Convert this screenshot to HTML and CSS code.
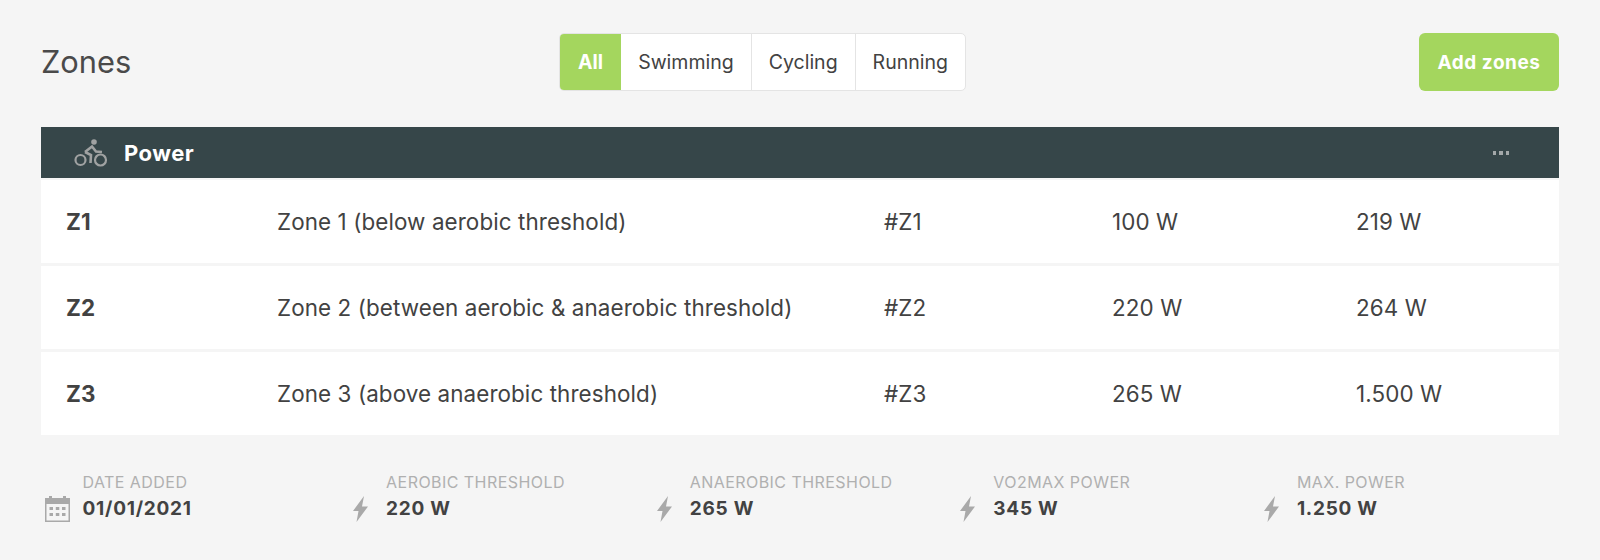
FILE: index.html
```html
<!DOCTYPE html>
<html lang="en">
<head>
<meta charset="utf-8">
<title>Zones</title>
<link rel="stylesheet" href="styles.css">
</head>
<body>
<main class="page">
  <header class="top">
    <h1 class="title">Zones</h1>
    <nav class="seg">
      <a class="seg-item active">All</a>
      <a class="seg-item">Swimming</a>
      <a class="seg-item">Cycling</a>
      <a class="seg-item">Running</a>
    </nav>
    <button class="add">Add zones</button>
  </header>
  <section class="bar">
    <svg class="bike" viewBox="0 0 34 28" width="34" height="28" fill="none" stroke="#a0a2a2">
      <circle cx="6.500" cy="21" r="5" stroke-width="2.200"/>
      <circle cx="26.500" cy="21" r="5.500" stroke-width="2.200"/>
      <circle cx="20" cy="3" r="2.800" fill="#a0a2a2" stroke="none"/>
      <path d="M11 13 L18 7.500 L22 12.500 L28 13" stroke-width="2.600"/>
      <path d="M11 13 L17 16 L16.500 24" stroke-width="2.600"/>
    </svg>
    <span class="bar-title">Power</span>
    <span class="dots"><i></i><i></i><i></i></span>
  </section>
  <div class="rows">
    <div class="row"><b>Z1</b><span>Zone 1 (below aerobic threshold)</span><span>#Z1</span><span>100 W</span><span>219 W</span></div>
    <div class="row"><b>Z2</b><span>Zone 2 (between aerobic &amp; anaerobic threshold)</span><span>#Z2</span><span>220 W</span><span>264 W</span></div>
    <div class="row"><b>Z3</b><span>Zone 3 (above anaerobic threshold)</span><span>#Z3</span><span>265 W</span><span>1.500 W</span></div>
  </div>
  <footer class="stats">
    <div class="stat">
      <span class="ico">
        <svg viewBox="0 0 27 27" width="27" height="27">
          <path fill="#a9a9a9" d="M1 3h4V1h3v2h11V1h3v2h4v24H1zM2.500 9v16.500h22V9z"/>
          <path fill="#a9a9a9" d="M5.500 12h3.500v3h-3.500zM11.800 12h3.500v3h-3.500zM18 12h3.500v3h-3.500zM5.500 18h3.500v3h-3.500zM11.800 18h3.500v3h-3.500zM18 18h3.500v3h-3.500z"/>
        </svg>
      </span>
      <div><div class="label">DATE ADDED</div><div class="value">01/01/2021</div></div>
    </div>
    <div class="stat">
      <span class="ico"><svg viewBox="0 0 15 26" width="15" height="26"><path fill="#a9a9a9" d="M11 0 L0 15 H5.500 L3.500 26 L15 10.500 H9 Z"/></svg></span>
      <div><div class="label">AEROBIC THRESHOLD</div><div class="value">220 W</div></div>
    </div>
    <div class="stat">
      <span class="ico"><svg viewBox="0 0 15 26" width="15" height="26"><path fill="#a9a9a9" d="M11 0 L0 15 H5.500 L3.500 26 L15 10.500 H9 Z"/></svg></span>
      <div><div class="label">ANAEROBIC THRESHOLD</div><div class="value">265 W</div></div>
    </div>
    <div class="stat">
      <span class="ico"><svg viewBox="0 0 15 26" width="15" height="26"><path fill="#a9a9a9" d="M11 0 L0 15 H5.500 L3.500 26 L15 10.500 H9 Z"/></svg></span>
      <div><div class="label">VO2MAX POWER</div><div class="value">345 W</div></div>
    </div>
    <div class="stat">
      <span class="ico"><svg viewBox="0 0 15 26" width="15" height="26"><path fill="#a9a9a9" d="M11 0 L0 15 H5.500 L3.500 26 L15 10.500 H9 Z"/></svg></span>
      <div><div class="label">MAX. POWER</div><div class="value">1.250 W</div></div>
    </div>
  </footer>
</main>
</body>
</html>
```
FILE: styles.css
```css
* { box-sizing: border-box; }
html, body { margin: 0; height: 100%; }
body {
  background: #f5f5f5;
  color: #424242;
  font-family: Inter, "Liberation Sans", sans-serif;
  overflow: hidden;
}
.page { padding: 33px 41px 0; }
.top {
  display: grid;
  grid-template-columns: 518px auto 1fr;
  align-items: center;
  height: 58px;
}
.title { margin: 0 0 1px; font-size: 30.800px; font-weight: 400; color: #4a4a4a; }
.seg {
  display: flex;
  height: 58px;
  align-self: start;
  border: 1px solid #e4e4e4;
  border-radius: 5px;
  background: #fff;
  overflow: hidden;
}
.seg-item {
  display: flex;
  align-items: center;
  padding: 0 17px;
  font-size: 19.500px;
  border-right: 1px solid #e4e4e4;
}
.seg-item:last-child { border-right: 0; }
.seg-item.active { background: #a4d65e; color: #fff; font-weight: 700; border-right: 0; padding: 0 18px; }
.add {
  justify-self: end;
  width: 140px;
  height: 58px;
  border: 0;
  border-radius: 6px;
  background: #a4d65e;
  color: #fff;
  font: 700 19px Inter, "Liberation Sans", sans-serif;
  letter-spacing: 0.550px;
}
.bar {
  display: flex;
  align-items: center;
  height: 51px;
  margin-top: 36px;
  padding-left: 33px;
  background: #364649;
}
.bar-title { margin-left: 16px; color: #fff; font-size: 22px; font-weight: 700; letter-spacing: 0.500px; }
.dots { margin-left: auto; margin-right: 50px; display: flex; gap: 3px; }
.dots i { width: 3.500px; height: 4px; background: #a3a8a9; }
.rows { display: flex; flex-direction: column; gap: 3px; margin-top: 2px; }
.row {
  display: grid;
  grid-template-columns: 211px 607px 228px 244px 1fr;
  align-items: center;
  height: 83px;
  padding-left: 25px;
  background: #fff;
  font-size: 22.400px;
  letter-spacing: 0.100px;
}
.row b { font-weight: 700; }
.stats {
  display: grid;
  grid-template-columns: repeat(5, 1fr);
  margin-top: 37px;
}
.stat { display: flex; align-items: flex-end; }
.ico { display: flex; justify-content: center; width: 32px; margin-right: 9.500px; margin-bottom: 3px; }
.label { font-size: 16px; color: #b0b0b0; line-height: 21px; letter-spacing: 0.450px; }
.value { font-size: 19px; font-weight: 700; line-height: 32px; color: #424242; letter-spacing: 0.750px; }
```
